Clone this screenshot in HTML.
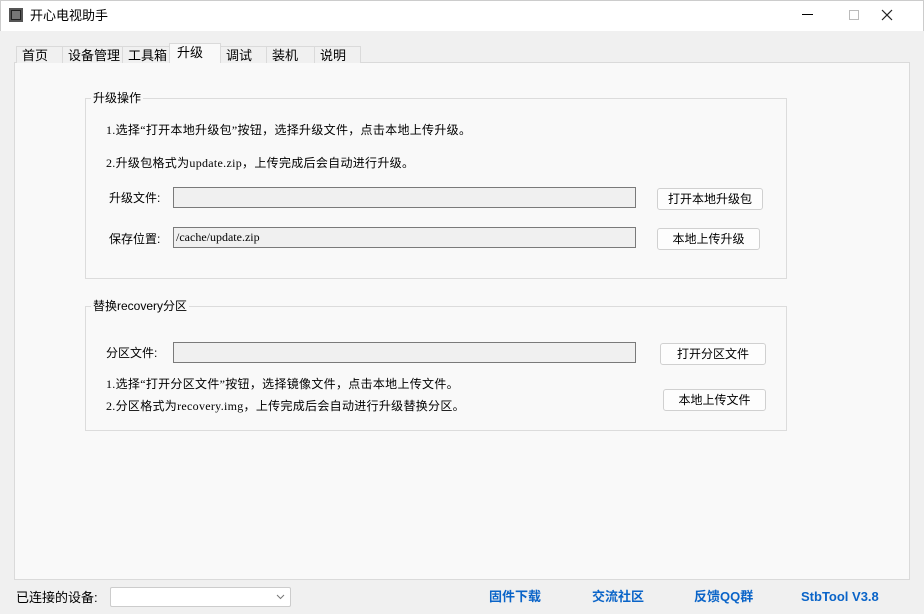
<!DOCTYPE html>
<html><head><meta charset="utf-8"><style>
*{margin:0;padding:0;box-sizing:border-box}
body{width:924px;height:614px;background:#f0f0f0;font-family:"Liberation Sans","Noto Sans CJK SC",sans-serif;font-size:12px;color:#000;position:relative;overflow:hidden}
.a{position:absolute;white-space:nowrap;line-height:16px}
.c{font-family:"Liberation Serif","Noto Sans CJK SC",sans-serif;letter-spacing:0.3px}
.title{left:0;top:0;width:924px;height:31px;background:#fff;border:1px solid #ccc;border-bottom:none}
.tab{position:absolute;top:46px;height:17px;border:1px solid #dadada;border-bottom:none;background:#f0f0f0;font-size:13px;line-height:18px;padding-left:5px}
.pane{left:14px;top:62px;width:896px;height:518px;background:#f9f9f9;border:1px solid #dadada}
.grp{border:1px solid #dcdcdc}
.gt{background:#f9f9f9;padding:0 2px;font-size:12px}
.inp{background:#f0f0f0;border:1px solid #7a7a7a;height:21px;width:463px;font-family:"Liberation Serif","Noto Serif CJK SC",serif;font-size:12px;padding:1px 2px}
.btn{background:#fdfdfd;border:1px solid #d0d0d0;border-radius:3px;height:22px;text-align:center;line-height:20px;font-size:12px}
.lk{color:#0a64c8;font-weight:bold;font-size:13px;top:589px;line-height:16px}
</style></head><body>
<div class="a title"></div>
<div class="a" style="left:9px;top:8px;width:14px;height:14px;background:#222;border:2px solid #555"></div>
<div class="a" style="left:12px;top:11px;width:8px;height:8px;background:#777"></div>
<div class="a" style="left:30px;top:8px;font-size:13px">开心电视助手</div>
<div class="a" style="left:802px;top:14px;width:11px;height:1px;background:#000"></div>
<div class="a" style="left:849px;top:10px;width:10px;height:10px;border:1px solid #bbb"></div>
<svg class="a" style="left:881px;top:9px" width="12" height="12"><path d="M1 1L11 11M11 1L1 11" stroke="#222" stroke-width="1.2"/></svg>
<div class="a pane"></div>
<div class="tab" style="left:16px;width:47px">首页</div>
<div class="tab" style="left:62px;width:61px">设备管理</div>
<div class="tab" style="left:122px;width:48px">工具箱</div>
<div class="tab" style="left:169px;width:52px;top:43px;height:20px;background:#f9f9f9;padding-left:7px;line-height:18px">升级</div>
<div class="tab" style="left:220px;width:47px">调试</div>
<div class="tab" style="left:266px;width:49px">装机</div>
<div class="tab" style="left:314px;width:47px">说明</div>

<div class="a grp" style="left:85px;top:98px;width:702px;height:181px"></div>
<div class="a gt" style="left:91px;top:90px">升级操作</div>
<div class="a c" style="left:106px;top:122px">1.选择“打开本地升级包”按钮，选择升级文件，点击本地上传升级。</div>
<div class="a c" style="left:106px;top:155px">2.升级包格式为update.zip，上传完成后会自动进行升级。</div>
<div class="a" style="left:109px;top:190px">升级文件:</div>
<div class="a inp" style="left:173px;top:187px"></div>
<div class="a btn" style="left:657px;top:188px;width:106px">打开本地升级包</div>
<div class="a" style="left:109px;top:231px">保存位置:</div>
<div class="a inp" style="left:173px;top:227px">/cache/update.zip</div>
<div class="a btn" style="left:657px;top:228px;width:103px">本地上传升级</div>

<div class="a grp" style="left:85px;top:306px;width:702px;height:125px"></div>
<div class="a gt" style="left:91px;top:298px">替换recovery分区</div>
<div class="a" style="left:106px;top:345px">分区文件:</div>
<div class="a inp" style="left:173px;top:342px"></div>
<div class="a btn" style="left:660px;top:343px;width:106px">打开分区文件</div>
<div class="a c" style="left:106px;top:376px">1.选择“打开分区文件”按钮，选择镜像文件，点击本地上传文件。</div>
<div class="a c" style="left:106px;top:398px">2.分区格式为recovery.img，上传完成后会自动进行升级替换分区。</div>
<div class="a btn" style="left:663px;top:389px;width:103px">本地上传文件</div>

<div class="a" style="left:16px;top:590px;font-size:13px">已连接的设备:</div>
<div class="a" style="left:110px;top:587px;width:181px;height:20px;background:#fff;border:1px solid #ccc;border-radius:2px"></div>
<svg class="a" style="left:276px;top:594px" width="9" height="6"><path d="M1 1L4.5 4.5L8 1" stroke="#777" fill="none"/></svg>
<div class="a lk" style="left:489px">固件下载</div>
<div class="a lk" style="left:592px">交流社区</div>
<div class="a lk" style="left:694px">反馈QQ群</div>
<div class="a lk" style="left:801px">StbTool V3.8</div>
</body></html>
